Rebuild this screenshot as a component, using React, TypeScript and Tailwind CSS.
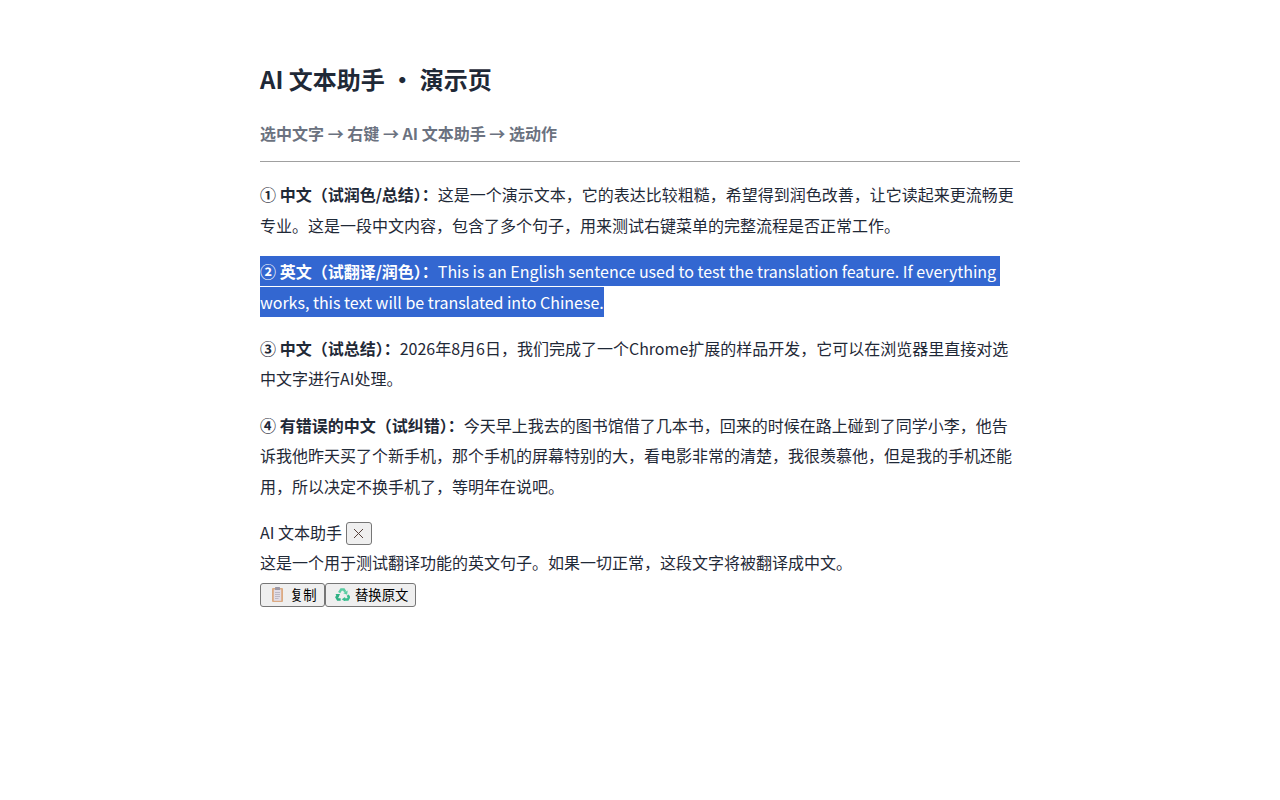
import React from 'react';

function ClipboardIcon() {
  return (
    <svg width="11" height="15" viewBox="0 0 11 15" className="shrink-0">
      <rect x="0" y="1" width="11" height="14" rx="1" fill="#dcaa82" />
      <rect x="1.8" y="2.5" width="7.4" height="11.3" fill="#e2dde6" />
      <rect x="3" y="0" width="5" height="3" rx="0.6" fill="#9c98a6" />
      <path d="M3 5.5h5M3 7.5h5M3 9.5h5M3 11.5h3.5" stroke="#b8b3c0" strokeWidth="0.9" />
    </svg>
  );
}

function RecycleIcon() {
  return (
    <svg width="15" height="13" viewBox="0 0 16 14" fill="none" strokeWidth="2.7" className="shrink-0">
      <path d="M4.4 5L6.6 1.5H9.4L11 4.2" stroke="#5ccda3" />
      <path d="M13.6 2.6L13 7.4 8.8 5.6z" fill="#5ccda3" />
      <path d="M6 12.4H3L1.6 10 3 7.6" stroke="#2fb184" />
      <path d="M0.4 6.4L5.4 6.4 3.4 10.4z" fill="#2fb184" />
      <path d="M13.6 7.6L15 10 13.6 12.4H10.6" stroke="#3bbd8f" />
      <path d="M10.8 9.6V14.6L7.2 12.2z" fill="#3bbd8f" />
    </svg>
  );
}

export default function App() {
  return (
    <div className="mx-auto w-[760px] pt-[40px] text-[16px] leading-[30.4px] text-[#1f2937] font-['Noto_Sans_CJK_SC','Noto_Sans',sans-serif]">
      <h1 className="text-[24px] leading-[36px] font-bold mt-[21px] mb-[21px]">AI 文本助手 · 演示页</h1>
      <div className="pb-[13px] font-bold text-[#6b7280] border-b border-[#a0a0a0] leading-[30.4px] mb-[17px]">
        选中文字 → 右键 → AI 文本助手 → 选动作
      </div>

      <p className="mb-[16px]">
        <strong>① 中文（试润色/总结）：</strong>这是一个演示文本，它的表达比较粗糙，希望得到润色改善，让它读起来更流畅更专业。这是一段中文内容，包含了多个句子，用来测试右键菜单的完整流程是否正常工作。
      </p>
      <p className="mb-[16px]">
        <span className="bg-[#3367d1] text-white py-[3px] box-decoration-clone">
          <strong>② 英文（试翻译/润色）：</strong>
          <span className="tracking-[-0.008px]">This is an English sentence used to test the translation feature. If everything{'\u00a0'}</span>
          <br />
          <span className="tracking-[-0.02px]">works, this text will be translated into Chinese.</span>
        </span>
      </p>
      <p className="mb-[16px]">
        <strong>③ 中文（试总结）：</strong>2026年8月6日，我们完成了一个Chrome扩展的样品开发，它可以在浏览器里直接对选中文字进行AI处理。
      </p>
      <p className="mb-[16px]">
        <strong>④ 有错误的中文（试纠错）：</strong>今天早上我去的图书馆借了几本书，回来的时候在路上碰到了同学小李，他告诉我他昨天买了个新手机，那个手机的屏幕特别的大，看电影非常的清楚，我很羡慕他，但是我的手机还能用，所以决定不换手机了，等明年在说吧。
      </p>

      <div>
        AI 文本助手{' '}
        <button className="inline-flex align-baseline items-center justify-center w-[26px] h-[23px] border border-[#767676] rounded-[3px] bg-[#efefef]">
          <svg width="11" height="11" viewBox="0 0 11 11" fill="none" stroke="#55403a" strokeWidth="1">
            <path d="M1 1l9 9M10 1l-9 9" />
          </svg>
        </button>
      </div>
      <div>这是一个用于测试翻译功能的英文句子。如果一切正常，这段文字将被翻译成中文。</div>
      <div className="flex mt-[5px] font-['Liberation_Sans','Noto_Sans_CJK_JP',sans-serif]">
        <button className="flex items-center gap-[7px] pl-[11px] w-[65px] h-[24px] border border-[#767676] rounded-[3px] bg-[#efefef] text-[13.33px] leading-none text-black">
          <ClipboardIcon />
          <span className="pt-[2px]">复制</span>
        </button>
        <button className="flex items-center gap-[5px] pl-[9px] w-[91px] h-[24px] border border-[#767676] rounded-[3px] bg-[#efefef] text-[13.33px] leading-none text-black">
          <RecycleIcon />
          <span className="pt-[2px]">替换原文</span>
        </button>
      </div>
    </div>
  );
}
